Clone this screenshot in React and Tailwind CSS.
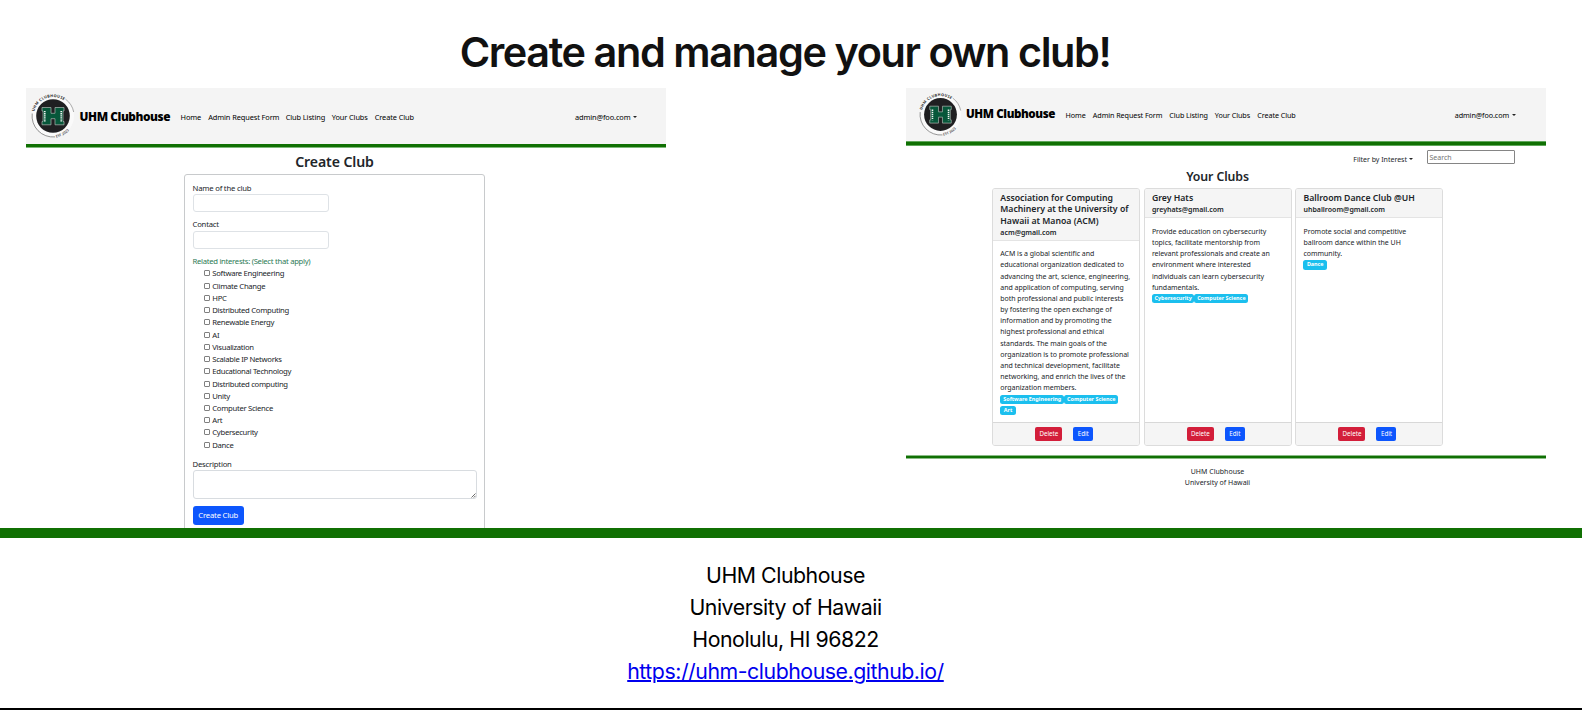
import React from 'react';

function Logo({ className }) {
  return (
    <svg viewBox="0 0 44 44" className={className}>
      <defs>
        <path id="ringTop" d="M3.2 17.5 A19.4 19.4 0 0 1 36 9" />
        <path id="ringBottom" d="M18 43.2 A21.2 21.2 0 0 0 43.2 20" />
      </defs>
      <circle cx="22" cy="22" r="21" fill="#fafafa" />
      <path d="M34.5 5.2 A21 21 0 0 1 42.7 18" fill="none" stroke="#777" strokeWidth="0.6" />
      <path d="M1.2 19.5 A21 21 0 0 0 24 42.9" fill="none" stroke="#666" strokeWidth="0.7" />
      <circle cx="22" cy="22" r="16.8" fill="#1f1f21" />
      <text fontSize="3.8" fontWeight="700" fill="#222" fontFamily="Noto Sans, sans-serif" textLength="37">
        <textPath href="#ringTop">UHM CLUBHOUSE</textPath>
      </text>
      <text fontSize="3.6" fontWeight="600" fill="#444" fontFamily="Noto Sans, sans-serif">
        <textPath href="#ringBottom" startOffset="7">EST 2023</textPath>
      </text>
      <path
        d="M11 13.5H20V19.3H24V13.5H33V17H32V27.5H33V30.8H24V24.7H20V30.8H11V27.5H12V17H11Z"
        fill="#07573a"
        stroke="#aeb8b3"
        strokeWidth="0.7"
      />
      <path d="M13.8 17V28M30.2 17V28" stroke="#f0f5f2" strokeWidth="1.6" strokeDasharray="1.3 0.8" />
    </svg>
  );
}

function Caret({ className = '' }) {
  return (
    <svg viewBox="0 0 4 2" className={`h-[2px] w-[4px] ${className}`}>
      <path d="M0 0H4L2 2Z" fill="#222" />
    </svg>
  );
}

const interests = [
  'Software Engineering', 'Climate Change', 'HPC', 'Distributed Computing', 'Renewable Energy',
  'AI', 'Visualization', 'Scalable IP Networks', 'Educational Technology', 'Distributed computing',
  'Unity', 'Computer Science', 'Art', 'Cybersecurity', 'Dance',
];

function CreateClub() {
  return (
    <section className="h-[440px] w-[640px] overflow-hidden text-[7.7px] leading-[12.26px] text-[#212529]">
      <header className="flex h-[56px] bg-[#f4f4f4] pl-[5px] text-black">
        <Logo className="mt-[5.5px] h-[44px] w-[44px]" />
        <div className="ml-[4.5px] w-[101px] whitespace-nowrap pt-[20px] font-['Open_Sans',sans-serif] text-[11.8px] font-extrabold leading-[16px] tracking-[-0.42px]">UHM Clubhouse</div>
        <nav className="flex whitespace-nowrap pt-[23.4px] text-[7.4px] tracking-[-0.1px]">
          <a className="w-[27.7px]">Home</a>
          <a className="w-[77.5px]">Admin Request Form</a>
          <a className="w-[46px]">Club Listing</a>
          <a className="w-[43px]">Your Clubs</a>
          <a>Create Club</a>
        </nav>
        <div className="ml-auto mr-[29px] flex pt-[23.4px] text-[7.4px] tracking-[-0.12px]">
          admin@foo.com
          <Caret className="ml-[2.5px] mt-[4.6px]" />
        </div>
      </header>
      <div className="h-[4px] border-b border-[#7fb87a] bg-[#107003]" />
      <h2 className="pr-[23px] pt-[0.8px] text-center text-[14.1px] font-semibold leading-[25.2px] tracking-[-0.1px]">Create Club</h2>
      <div className="ml-[158px] h-[380px] w-[301px] rounded-[3px] border border-[#c8cacc] px-[7.5px] pt-[6.5px] tracking-[-0.2px]">
        <div>Name of the club</div>
        <div className="h-[18px] w-[136.5px] rounded-[3px] border border-[#dee2e6]" />
        <div className="mt-[6.6px]">Contact</div>
        <div className="h-[18px] w-[136.5px] rounded-[3px] border border-[#dee2e6]" />
        <div className="mt-[6.5px] tracking-[-0.29px] text-[#2c7a55]">Related interests: (Select that apply)</div>
        <div className="pl-[11.5px] tracking-[-0.3px]">
          {interests.map((name) => (
            <div key={name} className="flex h-[12.24px]">
              <span className="mt-[3px] h-[6px] w-[6px] rounded-[1px] border border-[#808080]" />
              <span className="ml-[2.3px]">{name}</span>
            </div>
          ))}
        </div>
        <div className="mt-[6.8px]">Description</div>
        <div className="flex h-[29px] items-end justify-end rounded-[3px] border border-[#d8dce0]">
          <svg viewBox="0 0 5 5" className="h-[5px] w-[5px]">
            <path d="M0.5 4.5L4.5 0.5M2.8 4.5L4.5 2.8" stroke="#444" strokeWidth="0.8" />
          </svg>
        </div>
        <div className="mt-[7.2px] flex h-[18.4px] w-[51.5px] items-center justify-center rounded-[3px] bg-[#0d56fd] text-white">Create Club</div>
      </div>
    </section>
  );
}

const clubs = [
  {
    title: ['Association for Computing', 'Machinery at the University of', 'Hawaii at Manoa (ACM)'],
    email: 'acm@gmail.com',
    text: [
      'ACM is a global scientific and', 'educational organization dedicated to', 'advancing the art, science, engineering,',
      'and application of computing, serving', 'both professional and public interests', 'by fostering the open exchange of',
      'information and by promoting the', 'highest professional and ethical', 'standards. The main goals of the',
      'organization is to promote professional', 'and technical development, facilitate', 'networking, and enrich the lives of the',
      'organization members.',
    ],
    tags: [['Software Engineering', 'w-[64px]'], ['Computer Science', 'w-[54px]'], ['Art', 'w-[15.5px]']],
  },
  {
    title: ['Grey Hats'],
    email: 'greyhats@gmail.com',
    text: [
      'Provide education on cybersecurity', 'topics, facilitate mentorship from', 'relevant professionals and create an',
      'environment where interested', 'individuals can learn cybersecurity', 'fundamentals.',
    ],
    tags: [['Cybersecurity', 'w-[42.5px]'], ['Computer Science', 'w-[54px]']],
  },
  {
    title: ['Ballroom Dance Club @UH'],
    email: 'uhballroom@gmail.com',
    text: ['Promote social and competitive', 'ballroom dance within the UH', 'community.'],
    tags: [['Dance', 'w-[23.5px]']],
  },
];

function ClubCard({ club }) {
  return (
    <article className="flex h-[258px] w-[148px] flex-col overflow-hidden whitespace-nowrap rounded-[3px] border border-[#dcdcdc]">
      <div className="border-b border-[#e4e4e4] bg-[#f5f5f5] pb-[1.7px] pl-[7px] pt-[4.8px]">
        <h3 className="text-[8.7px] font-semibold leading-[11.17px]">
          {club.title.map((line) => <div key={line}>{line}</div>)}
        </h3>
        <div className="text-[7px] font-semibold">{club.email}</div>
      </div>
      <div className="flex-1 pl-[7px] pt-[7.6px]">
        <div className="tracking-[-0.03px]">
          {club.text.map((line) => <div key={line}>{line}</div>)}
        </div>
        <div className="flex w-[125px] flex-wrap gap-y-[2px] pt-[1px]">
          {club.tags.map(([name, width]) => (
            <span key={name} className={`${width} h-[9.2px] rounded-[2.5px] bg-[#1bbfee] text-center text-[5.4px] font-bold leading-[9.4px] text-white`}>{name}</span>
          ))}
        </div>
      </div>
      <div className="flex h-[23px] justify-center gap-[11px] border-t border-[#d8d8d8] bg-[#f5f5f5] pr-[4px] pt-[4px] text-[6.2px] leading-[14.5px] text-white">
        <span className="h-[14.5px] w-[27px] rounded-[2px] bg-[#d31e3a] text-center">Delete</span>
        <span className="h-[14.5px] w-[20px] rounded-[2px] bg-[#0d56fd] text-center">Edit</span>
      </div>
    </article>
  );
}

function YourClubs() {
  return (
    <section className="h-[403px] w-[640px] overflow-hidden text-[7px] leading-[11.17px] text-[#212529]">
      <header className="flex h-[53px] bg-[#f4f4f4] pl-[13px] text-black">
        <Logo className="mt-[4.5px] h-[43px] w-[43px]" />
        <div className="ml-[4px] w-[99.5px] whitespace-nowrap pt-[18px] font-['Open_Sans',sans-serif] text-[11.6px] font-extrabold leading-[16px] tracking-[-0.42px]">UHM Clubhouse</div>
        <nav className="flex whitespace-nowrap pt-[22.1px] text-[7.2px] tracking-[-0.08px]">
          <a className="w-[27.3px]">Home</a>
          <a className="w-[76.5px]">Admin Request Form</a>
          <a className="w-[45.5px]">Club Listing</a>
          <a className="w-[42.5px]">Your Clubs</a>
          <a>Create Club</a>
        </nav>
        <div className="ml-auto mr-[30.5px] flex pt-[22.1px] text-[7.2px] tracking-[-0.1px]">
          admin@foo.com
          <Caret className="ml-[2.5px] mt-[3.7px]" />
        </div>
      </header>
      <div className="h-[5px] border-y border-[#5fa75a] bg-[#107003]" />
      <div className="flex h-[23px] justify-end pr-[31px]">
        <div className="flex pt-[8px]">
          Filter by Interest
          <Caret className="ml-[2px] mt-[4px]" />
        </div>
        <div className="ml-[14px] mt-[3.5px] h-[14.5px] w-[88px] rounded-[1px] border border-[#858585] pl-[1.5px] pt-[1px] text-[#757575]">Search</div>
      </div>
      <h2 className="pr-[17px] text-center text-[12.3px] font-semibold leading-[15px] tracking-[-0.1px]">Your Clubs</h2>
      <div className="ml-[86.3px] mt-[3.5px] flex gap-[3.6px]">
        {clubs.map((club) => <ClubCard key={club.email} club={club} />)}
      </div>
      <div className="mt-[9px] h-[4.5px] border-y border-[#8abc86] bg-[#107003]" />
      <div className="pr-[17px] pt-[7.3px] text-center">
        <div>UHM Clubhouse</div>
        <div>University of Hawaii</div>
        <div className="-mt-[1px]">Honolulu, HI 96822</div>
      </div>
    </section>
  );
}

export default function App() {
  return (
    <div className="flex h-[710px] w-[1582px] flex-col overflow-hidden border-b-2 border-black bg-white font-['Noto_Sans',sans-serif]">
      <h1 className="pr-[12px] pt-[27px] text-center font-['Inter',sans-serif] text-[41.4px] font-semibold leading-[50px] tracking-[-1.4px] text-[#111]">
        Create and manage your own club!
      </h1>
      <main className="mt-[11px] flex h-[440px] justify-between pl-[26px] pr-[36px]">
        <CreateClub />
        <YourClubs />
      </main>
      <footer className="flex-1 border-t-[10px] border-[#107003] pr-[11px] pt-[21px] text-center font-['Inter',sans-serif] text-[21.3px] leading-[32px] tracking-[-0.46px] text-black">
        <div>UHM Clubhouse</div>
        <div>University of Hawaii</div>
        <div>Honolulu, HI 96822</div>
        <a className="text-[#0000ee] underline decoration-2">https://uhm-clubhouse.github.io/</a>
      </footer>
    </div>
  );
}
